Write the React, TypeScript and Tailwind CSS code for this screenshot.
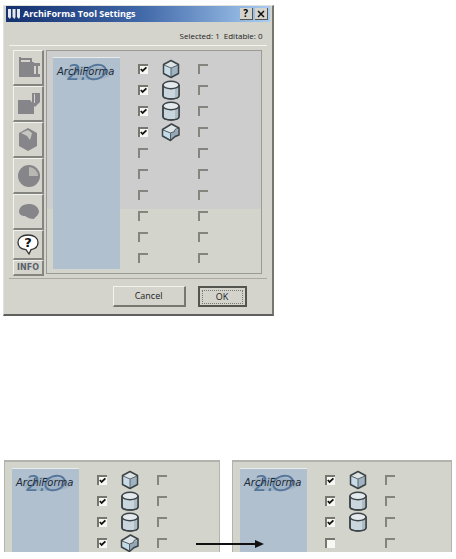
import React from "react";

type Shape = "cube" | "cylinder" | "cut";

type Row = {
  shape?: Shape;
  checked?: boolean;
  enabled?: boolean;
};

const dialogRows: Row[] = [
  { shape: "cube", checked: true, enabled: true },
  { shape: "cylinder", checked: true, enabled: true },
  { shape: "cylinder", checked: true, enabled: true },
  { shape: "cut", checked: true, enabled: true },
  {},
  {},
  {},
  {},
  {},
  {},
];

const beforeRows = dialogRows.slice(0, 4);
const afterRows: Row[] = [...dialogRows.slice(0, 3), { enabled: true }];

const ShapeIcon = ({ shape }: { shape?: Shape }) => {
  if (!shape) return <span className="w-5" />;
  return (
    <svg
      viewBox="0 0 20 20"
      className="h-5 w-5"
      stroke="#3c4448"
      strokeWidth="1.5"
      strokeLinejoin="round"
    >
      {shape === "cube" && (
        <>
          <path d="M2.5 5.5 10 9V18.5L2.5 14.5Z" fill="#c9dbe6" stroke="none" />
          <path d="M17.5 5.5 10 9V18.5L17.5 14.5Z" fill="#9fb3c0" stroke="none" />
          <path d="M10 2 17.5 5.5 10 9 2.5 5.5Z" fill="#dde4e6" stroke="none" />
          <path d="M3 6 10 9 17 6M10 9V18" fill="none" stroke="#5b676e" strokeWidth="1" />
          <path d="M10 1.5 17.5 5.5V14.5L10 18.5 2.5 14.5V5.5Z" fill="none" />
        </>
      )}
      {shape === "cylinder" && (
        <>
          <path d="M2 5V15.5C2 20 18 20 18 15.5V5Z" fill="#cad6de" />
          <path d="M14 8V18.5C17 18 18 16.5 18 15.5V5Z" fill="#aebcc6" stroke="none" />
          <path d="M18 5V15.5C18 20 2 20 2 15.5V5" fill="none" />
          <ellipse cx="10" cy="5" rx="8" ry="3.7" fill="#e3e9ec" />
        </>
      )}
      {shape === "cut" && (
        <>
          <path d="M1.5 7.5 9.5 11V18.5L1.5 14Z" fill="#c3dbe9" stroke="none" />
          <path d="M9.5 11 18 7V13.5L9.5 18.5Z" fill="#94a8b6" stroke="none" />
          <path d="M1.5 7.5 10.500 2 18 6 14 7.500 13.500 9.500 9.5 11Z" fill="#dde5e8" stroke="none" />
          <path d="M2 8 9.5 11 13.5 9.5 14 7.5 18 6M9.5 11V18" fill="none" stroke="#4f5b63" strokeWidth="1" />
          <path d="M1.5 7.5 10.5 2 18 6V13L14 14.500 9.5 18.5 1.5 14Z" fill="none" />
        </>
      )}
    </svg>
  );
};

const CheckBox = ({
  label,
  checked,
  enabled,
}: {
  label: string;
  checked?: boolean;
  enabled?: boolean;
}) => (
  <span className="relative flex h-[10px] w-[10px]">
    <input
      type="checkbox"
      aria-label={label}
      defaultChecked={checked}
      disabled={!enabled}
      className="peer h-full w-full appearance-none border-l-2 border-t-2 border-[#77776f] bg-[#f7f7f3] disabled:border-[#85857f] disabled:bg-transparent"
    />
    <svg
      viewBox="0 0 10 10"
      className="pointer-events-none absolute inset-0 hidden h-[10px] w-[10px] peer-checked:block"
      fill="none"
      stroke="#111"
      strokeWidth="1.8"
    >
      <path d="M2.8 5 4.6 7 8.4 3.4" />
    </svg>
  </span>
);

const Logo = () => (
  <svg viewBox="0 0 67 26" className="w-full" role="img" aria-label="ArchiForma 2.0">
    <ellipse cx="34" cy="15" rx="25" ry="7" fill="#8fa6ba" opacity="0.5" />
    <text
      x="14"
      y="22"
      fontFamily="DejaVu Sans, sans-serif"
      fontStyle="italic"
      fontSize="21"
      fill="#55769a"
    >
      2.
    </text>
    <ellipse
      cx="43"
      cy="14"
      rx="10"
      ry="7"
      transform="rotate(-18 43 14)"
      fill="none"
      stroke="#55769a"
      strokeWidth="2"
    />
    <text
      x="4"
      y="17"
      fontFamily="DejaVu Sans, sans-serif"
      fontStyle="italic"
      fontSize="10"
      fill="#1d2a38"
    >
      ArchiForma
    </text>
  </svg>
);

const ShapeList = ({ rows, name }: { rows: Row[]; name: string }) => (
  <div className="flex h-full">
    <div className="w-[67px] shrink-0 border-t border-[#e6ebec] bg-[#b0c0ce]">
      <Logo />
    </div>
    <div className="flex flex-col pl-[18px] pt-px">
      {rows.map((row, index) => (
        <div className="flex h-[21px] shrink-0 items-center" key={index}>
          <CheckBox
            label={`${name} shape ${index + 1}`}
            checked={row.checked}
            enabled={row.enabled}
          />
          <span className="flex pl-[13px] pr-[17px]">
            <ShapeIcon shape={row.shape} />
          </span>
          <CheckBox label={`${name} option ${index + 1}`} />
        </div>
      ))}
    </div>
  </div>
);

const tools = [
  {
    name: "Profile",
    icon: (
      <>
        <path d="M3 7h15v15H3z" />
        <path d="M3 2h2v5H3zM5 3h10v2H5zM14 3h2v4h-2zM18 8h6v3h-2v8h2v3h-6v-3h2v-8h-2z" />
      </>
    ),
  },
  {
    name: "Section",
    icon: (
      <>
        <path d="M2 9h12l4 5v9H2z" />
        <path d="M16 2h8v9l-5 5-3-4z" />
        <path d="M18.5 3v9" stroke="#d3d3cc" />
      </>
    ),
  },
  {
    name: "Solid",
    icon: (
      <>
        <path d="M12 1 21 6v13l-9 5-9-5V6z" />
        <path d="M5 6 12 3l4 3-1 4-1 3-3-4z" fill="#c6c6c0" />
      </>
    ),
  },
  {
    name: "Angle",
    icon: (
      <>
        <circle cx="13" cy="13" r="11" />
        <path d="M13 4a9 9 0 0 1 9 9h-9z" fill="#b8b8b3" />
      </>
    ),
  },
  {
    name: "Material",
    icon: <path d="M3 12C4 6 9 5 14 5c5 0 9 4 9 8-1 4-3 4-5 7-4 0-6-1-9-3-3 0-6-1-6-5z" />,
  },
];

const ToolBar = () => (
  <div className="flex w-[31px] shrink-0 flex-col">
    {tools.map((tool) => (
      <button
        type="button"
        aria-label={tool.name}
        key={tool.name}
        className="flex h-9 items-center justify-center border-b-2 border-l border-r-2 border-t border-b-[#85857f] border-l-[#f2f2ee] border-r-[#85857f] border-t-[#f2f2ee]"
      >
        <svg viewBox="0 0 25 25" className="h-[25px] w-[25px]" fill="#85858a">
          {tool.icon}
        </svg>
      </button>
    ))}
    <button
      type="button"
      aria-label="Help"
      className="flex h-[30px] items-center justify-center border-b-2 border-l border-r-2 border-t border-b-[#85857f] border-l-[#f2f2ee] border-r-[#85857f] border-t-[#f2f2ee]"
    >
      <svg viewBox="0 0 24 24" className="h-6 w-6">
        <path
          d="M12 2c6 0 10 3 10 7.5 0 4-3 6.5-7 7.200L13 21l-3-4.300C5 16 2 13.5 2 9.5 2 5 6 2 12 2z"
          fill="#fff"
          stroke="#333"
          strokeWidth="1.3"
        />
        <text
          x="12"
          y="14"
          textAnchor="middle"
          fontFamily="DejaVu Sans, sans-serif"
          fontWeight="bold"
          fontSize="13"
          fill="#111"
        >
          ?
        </text>
      </svg>
    </button>
    <button
      type="button"
      className="h-4 border-b-2 border-l border-r-2 border-t border-b-[#85857f] border-l-[#f2f2ee] border-r-[#85857f] border-t-[#f2f2ee] font-['DejaVu_Sans'] text-[8px] font-bold leading-3 text-[#5a636c]"
    >
      INFO
    </button>
  </div>
);

const Dialog = () => (
  <section className="border-b-2 border-l border-r-2 border-t border-b-[#5f5f5c] border-l-[#e2e2dc] border-r-[#77776f] border-t-[#e2e2dc] bg-[#d4d4cc] px-0.5 pb-[7px]">
    <header className="flex h-4 items-center gap-0.5 bg-linear-to-r from-[#14306f] via-[#3f66a6] to-[#a9cdf2] pr-0.5">
      <svg viewBox="0 0 14 12" className="ml-px h-3 w-[14px]" fill="#e4e8ee">
        <path d="M1 1h3v8l-1 2-2-2zM5.5 1h3v8l-1 2-2-2zM10 1h3v8l-1 2-2-2z" />
      </svg>
      <h1 className="grow whitespace-nowrap text-[9px] font-bold leading-4 text-white">
        ArchiForma Tool Settings
      </h1>
      <button
        type="button"
        aria-label="Help"
        className="h-3 w-[13px] border-b border-r border-[#55554f] bg-[#d4d4cc] text-[10px] font-bold leading-[11px] text-black"
      >
        ?
      </button>
      <button
        type="button"
        aria-label="Close"
        className="flex h-3 w-[13px] items-center justify-center border-b border-r border-[#55554f] bg-[#d4d4cc]"
      >
        <svg viewBox="0 0 8 8" className="h-2 w-2" stroke="#111" strokeWidth="1.5">
          <path d="M1 1 7 7M7 1 1 7" />
        </svg>
      </button>
    </header>
    <p className="mx-[3px] flex h-6 items-end justify-end gap-1 border-b border-[#f2f2ee] pb-[3px] pr-1 text-[8px] leading-3 text-[#222]">
      <span>Selected: 1</span>
      <span>Editable: 0</span>
    </p>
    <div className="mx-[3px] flex gap-0.5 border-b border-[#aaaaa3] pb-0.5 pl-1 pr-[5px] pt-1">
      <ToolBar />
      <div className="mb-0.5 grow border border-[#9b9b95] bg-linear-to-b from-[#cecdce] from-[158px] to-[#d3d4cb] to-[158px] pb-1 pl-[6px] pt-[6px]">
        <ShapeList rows={dialogRows} name="Dialog" />
      </div>
    </div>
    <div className="flex justify-end gap-3 pr-[23px] pt-[7px] text-[9px] text-[#222]">
      <button
        type="button"
        className="h-[21px] w-[73px] border-b-2 border-l border-r-2 border-t border-b-[#77776f] border-l-[#f2f2ee] border-r-[#77776f] border-t-[#f2f2ee]"
      >
        Cancel
      </button>
      <button
        type="button"
        className="h-[21px] w-[49px] border-2 border-[#55554f] p-0.5 leading-3"
      >
        <span className="block border border-dotted border-[#77776f]">OK</span>
      </button>
    </div>
  </section>
);

const Preview = ({ rows, name }: { rows: Row[]; name: string }) => (
  <div className="h-[92px] overflow-hidden border-l border-r border-t-2 border-[#b3b3ae] bg-[#d3d4cb] pl-[7px] pt-[6px]">
    <ShapeList rows={rows} name={name} />
  </div>
);

const App = () => {
  return (
    <main className="bg-white pb-1 pt-[5px] font-['Open_Sans',sans-serif]">
      <div className="w-3/5 pl-[3px]">
        <Dialog />
      </div>
      <div className="relative mt-36 grid grid-cols-[54fr_55fr] gap-3 px-1">
        <Preview rows={beforeRows} name="Before" />
        <Preview rows={afterRows} name="After" />
        <div className="absolute bottom-1 left-[43%] flex w-[15%] items-center">
          <span className="h-0.5 grow bg-[#111]" />
          <svg viewBox="0 0 9 8" className="h-2 w-[9px]" fill="#111">
            <path d="M0 0 9 4 0 8Z" />
          </svg>
        </div>
      </div>
    </main>
  );
};

export default App;
